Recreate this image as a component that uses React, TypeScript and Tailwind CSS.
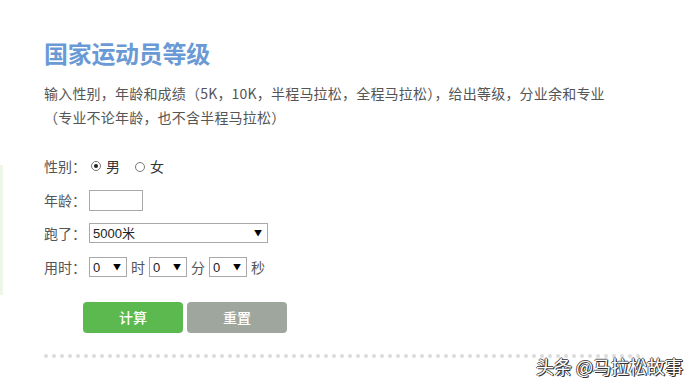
import React from "react";

const font = { fontFamily: '"Noto Sans CJK SC", "Noto Sans", sans-serif' };

function Radio({ checked }: { checked?: boolean }) {
  return (
    <span className="inline-flex items-center justify-center w-[10px] h-[10px] rounded-full border border-[#777] bg-white">
      {checked ? <span className="w-[4px] h-[4px] rounded-full bg-[#222]" /> : null}
    </span>
  );
}

function Sel({ value, w }: { value: string; w: string }) {
  return (
    <div className={`flex items-center justify-between h-[20px] border border-[#a9a9a9] bg-white pl-[3px] pr-[5px] text-[13px] text-[#222] ${w}`}>
      <span className="leading-none" style={{ fontFamily: '"Liberation Sans", "Noto Sans CJK SC", sans-serif' }}>{value}</span>
      <span className="text-[8px] leading-none text-black">▼</span>
    </div>
  );
}

export default function App() {
  return (
    <div className="relative w-[694px] h-[387px] bg-white overflow-hidden" style={font}>
      <div className="absolute left-0 top-[165px] w-[3px] h-[130px] bg-[#eef6e8]" />
      <div className="pl-[44px] pt-[36px]">
        <h1 className="text-[24px] font-bold leading-[34px] text-[#6a9ad6] tracking-[-0.3px]">国家运动员等级</h1>
        <p className="mt-[11px] text-[14px] leading-[24px] text-[#555] tracking-[0.2px]">
          输入性别，年龄和成绩（5K，10K，半程马拉松，全程马拉松），给出等级，分业余和专业
          <br />
          （专业不论年龄，也不含半程马拉松）
        </p>
        <div className="mt-[27px] flex flex-col text-[14px] text-[#555]">
          <div className="flex items-center h-[20px] gap-[2px]">
            <span className="w-[45px]">性别：</span>
            <Radio checked />
            <span className="ml-[3px] text-[#333]">男</span>
            <span className="ml-[13px]"><Radio /></span>
            <span className="ml-[3px] text-[#333]">女</span>
          </div>
          <div className="flex items-center h-[22px] mt-[13px]">
            <span className="w-[45px]">年龄：</span>
            <div className="w-[54px] h-[21px] border border-[#a9a9a9] bg-white" />
          </div>
          <div className="flex items-center h-[20px] mt-[12px]">
            <span className="w-[45px]">跑了：</span>
            <Sel value="5000米" w="w-[179px]" />
          </div>
          <div className="flex items-center h-[20px] mt-[14px]">
            <span className="w-[45px]">用时：</span>
            <Sel value="0" w="w-[38px]" />
            <span className="mx-[4px]">时</span>
            <Sel value="0" w="w-[38px]" />
            <span className="mx-[4px]">分</span>
            <Sel value="0" w="w-[38px]" />
            <span className="ml-[4px]">秒</span>
          </div>
        </div>
        <div className="mt-[25px] ml-[39px] flex gap-[4px]">
          <button className="w-[100px] h-[31px] rounded-[4px] bg-[#5cb950] text-white text-[14px] font-medium">计算</button>
          <button className="w-[100px] h-[31px] rounded-[4px] bg-[#9fa69d] text-white text-[14px] font-medium">重置</button>
        </div>
        <div className="mt-[21px] flex gap-[4px]">
          {Array.from({ length: 75 }).map((_, i) => (
            <span key={i} className="w-[4px] h-[4px] rounded-full bg-[#dcdcdc] shrink-0" />
          ))}
        </div>
      </div>
      <div
        className="absolute right-[11px] bottom-[12px] text-[18px] text-white leading-none"
        style={{ textShadow: "1px 1px 0 #333, -1px 0 0 #555, 0 -1px 0 #555, 1px 0 0 #333" }}
      >
        头条 @马拉松故事
      </div>
    </div>
  );
}
